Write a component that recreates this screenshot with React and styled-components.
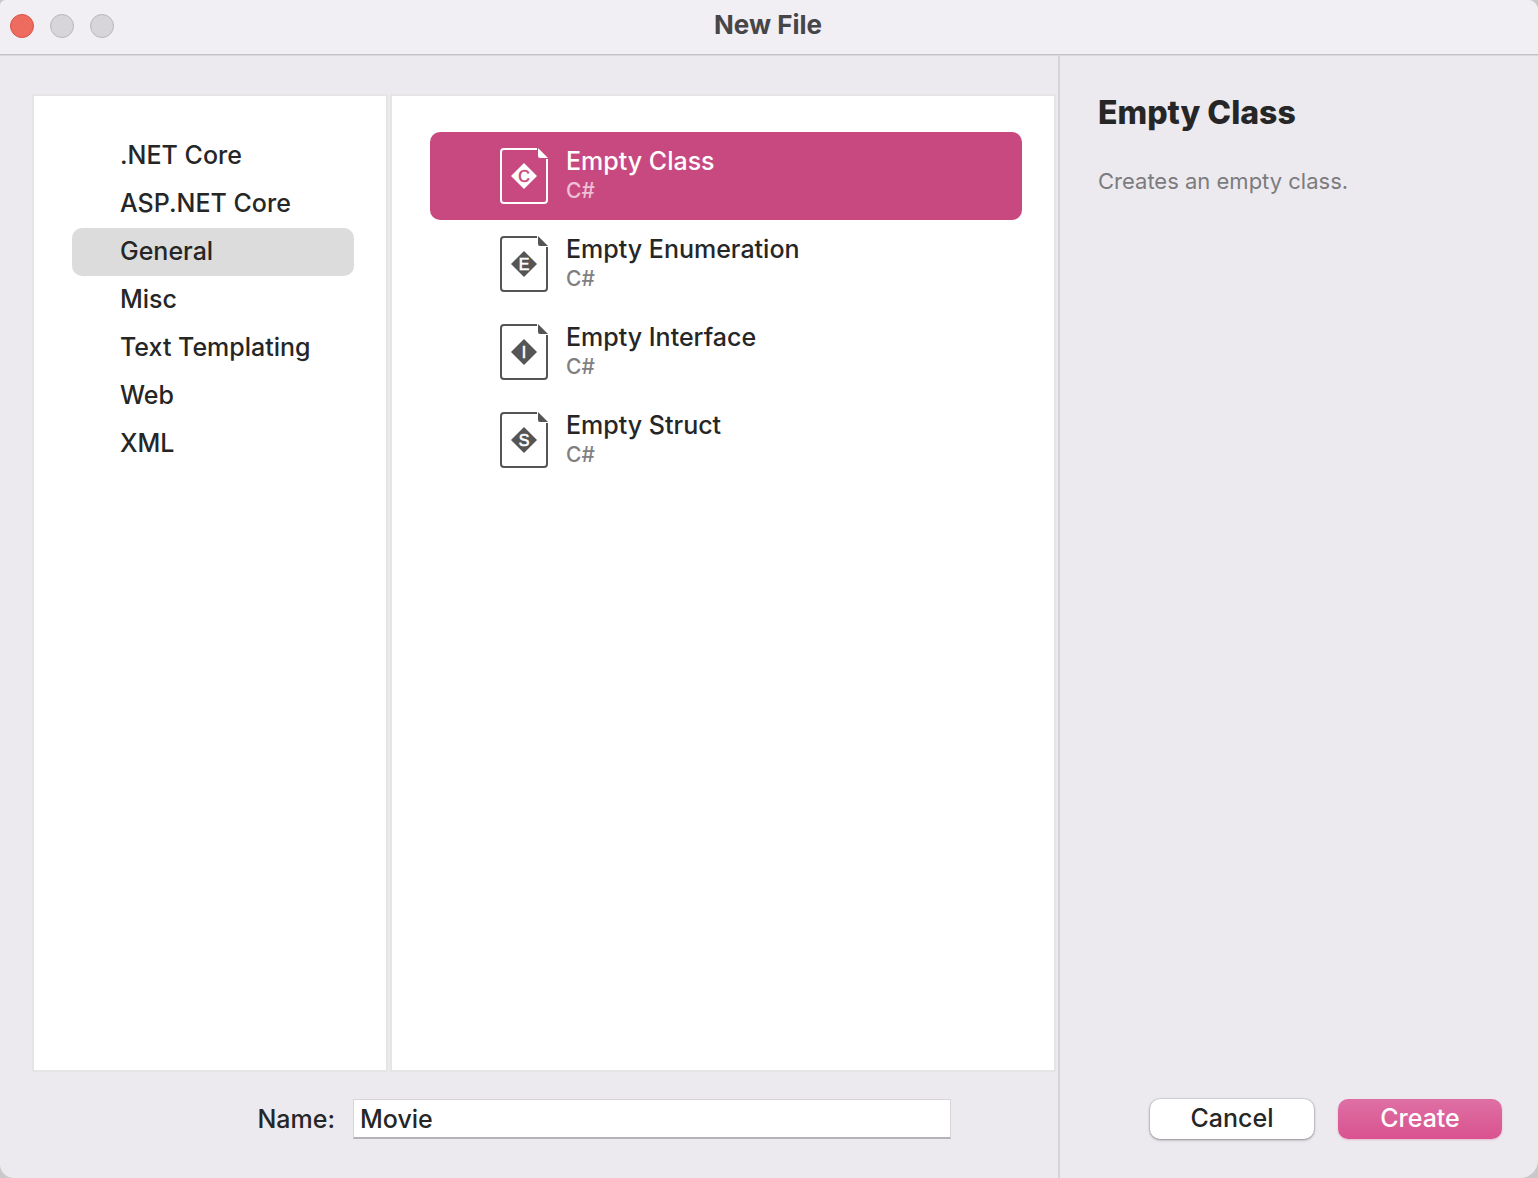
import React, { useState } from "react";
import styled, { createGlobalStyle } from "styled-components";

const GlobalStyle = createGlobalStyle`
  *, *::before, *::after { box-sizing: border-box; }
  body {
    margin: 0;
    background: #c9c9c9;
    color: #262626;
    font-family: Inter, "Liberation Sans", sans-serif;
    font-size: 25px;
    font-weight: 450;
    line-height: 32px;
  }
  button, input { font: inherit; color: inherit; }
  h1, h2, p, ul { margin: 0; padding: 0; }
  ul { list-style: none; }
`;

const Window = styled.main`
  display: flex;
  flex-direction: column;
  min-height: 100vh;
  overflow: hidden;
  background: #eceaef;
  border-radius: 6px 10px 18px 14px;
`;

const TitleBar = styled.header`
  display: grid;
  grid-template-columns: 1fr auto 1fr;
  align-items: center;
  height: 56px;
  padding: 0 12px 4px 10px;
  background: #f1eef4;
  border-bottom: 1px solid #d9d7dc;
  box-shadow: inset 0 -1px #c3c1c7;
`;

const WindowControls = styled.div`
  display: flex;
  gap: 16px;
`;

const ControlDot = styled.button`
  width: 24px;
  height: 24px;
  padding: 0;
  border: 1px solid ${(p) => (p.$active ? "#db5247" : "#b9b6bd")};
  border-radius: 50%;
  background: ${(p) => (p.$active ? "#ed6b5f" : "#d7d4da")};
`;

const Title = styled.h1`
  padding-bottom: 2px;
  font-size: 26px;
  font-weight: 700;
  color: #464548;
`;

const Body = styled.div`
  display: grid;
  grid-template-columns: minmax(0, 1058fr) minmax(0, 480fr);
  flex: 1;
`;

const Chooser = styled.section`
  display: flex;
  flex-direction: column;
  padding: 38px 2px 39px 32px;
`;

const Panels = styled.div`
  display: grid;
  grid-template-columns: minmax(0, 356fr) minmax(0, 666fr);
  gap: 2px;
  flex: 1;
`;

const Panel = styled.ul`
  padding: 36px 32px 36px 38px;
  border: 2px solid #e5e5e5;
  background: #fff;
`;

const Category = styled.button`
  display: block;
  width: 100%;
  height: 48px;
  padding: 0 48px 2px;
  border: 0;
  border-radius: 10px;
  background: ${(p) => (p.$selected ? "#dcdcdc" : "transparent")};
  text-align: left;
  white-space: nowrap;
`;

const Template = styled.button`
  display: flex;
  align-items: center;
  gap: 18px;
  width: 100%;
  height: 88px;
  padding: 0 70px;
  border: 0;
  border-radius: 10px;
  background: ${(p) => (p.$selected ? "#c84980" : "#fff")};
  color: ${(p) => (p.$selected ? "#fff" : "#262626")};
  text-align: left;
`;

const TemplateIcon = styled.svg`
  flex: none;
  width: 48px;
  height: 56px;
  color: ${(p) => (p.$selected ? "#fff" : "#555")};
  --paper: ${(p) => (p.$selected ? "#c84980" : "#fff")};
`;

const TemplateText = styled.span`
  display: flex;
  flex-direction: column;
  gap: 1px;
  padding-bottom: 3px;
`;

const Language = styled.span`
  font-size: 21px;
  line-height: 26px;
  color: ${(p) => (p.$selected ? "#efbfd6" : "#808080")};
`;

const NameRow = styled.div`
  display: grid;
  grid-template-columns: minmax(0, 303fr) minmax(0, 598fr) minmax(0, 87fr);
  column-gap: 18px;
  align-items: center;
  margin-top: 27px;
`;

const NameLabel = styled.label`
  text-align: right;
`;

const NameInput = styled.input`
  width: 100%;
  height: 40px;
  padding: 0 6px;
  border: 1px solid #d6d4d9;
  border-bottom: 2px solid #b5b3b8;
  border-radius: 0;
  background: #fff;
  outline: none;
`;

const Details = styled.aside`
  display: flex;
  flex-direction: column;
  padding: 37px 36px 39px 38px;
  border-left: 2px solid #d6d4d9;
`;

const DetailsTitle = styled.h2`
  font-size: 32px;
  line-height: 40px;
  font-weight: 800;
`;

const Description = styled.p`
  margin-top: 32px;
  font-size: 22px;
  font-weight: 400;
  color: #7c7b7e;
`;

const Actions = styled.div`
  display: flex;
  justify-content: flex-end;
  gap: 24px;
  margin-top: auto;
`;

const Action = styled.button`
  width: 164px;
  height: 40px;
  padding: 0 0 2px;
  border: 0;
  border-radius: 10px;
  background: ${(p) => (p.$primary ? "linear-gradient(#de70a4, #d9528f)" : "#fff")};
  color: ${(p) => (p.$primary ? "#fff" : "#262626")};
  font-weight: ${(p) => (p.$primary ? 500 : 450)};
  box-shadow: ${(p) =>
    p.$primary
      ? "0 1px 2px rgba(200, 73, 128, 0.3)"
      : "0 0 0 1px rgba(0, 0, 0, 0.08), 0 1px 3px rgba(0, 0, 0, 0.35)"};
`;

const categories = [".NET Core", "ASP.NET Core", "General", "Misc", "Text Templating", "Web", "XML"];

const templates = [
  { name: "Empty Class", letter: "C", description: "Creates an empty class." },
  { name: "Empty Enumeration", letter: "E", description: "Creates an empty enumeration." },
  { name: "Empty Interface", letter: "I", description: "Creates an empty interface." },
  { name: "Empty Struct", letter: "S", description: "Creates an empty struct." },
];

function FileIcon({ letter, selected }) {
  return (
    <TemplateIcon $selected={selected} viewBox="0 0 48 56" aria-hidden="true">
      <path
        d="M37 1H4a3 3 0 0 0-3 3v48a3 3 0 0 0 3 3h40a3 3 0 0 0 3-3V11"
        fill="none"
        stroke="currentColor"
        strokeWidth="2"
      />
      <path d="M38 0 48 10H40a2 2 0 0 1-2-2Z" fill="currentColor" />
      <path d="M24 15 37 28 24 41 11 28Z" fill="currentColor" />
      <text
        x="24"
        y="34"
        textAnchor="middle"
        fontFamily="'Liberation Sans', sans-serif"
        fontSize="16"
        fill="var(--paper)"
        stroke="var(--paper)"
        strokeWidth="0.6"
      >
        {letter}
      </text>
    </TemplateIcon>
  );
}

export default function App() {
  const [category, setCategory] = useState("General");
  const [selected, setSelected] = useState(0);
  const [name, setName] = useState("Movie");
  const current = templates[selected];

  return (
    <>
      <GlobalStyle />
      <Window>
        <TitleBar>
          <WindowControls>
            <ControlDot type="button" $active aria-label="Close" />
            <ControlDot type="button" aria-label="Minimize" disabled />
            <ControlDot type="button" aria-label="Zoom" disabled />
          </WindowControls>
          <Title>New File</Title>
        </TitleBar>
        <Body>
          <Chooser>
            <Panels>
              <Panel aria-label="Categories">
                {categories.map((item) => (
                  <li key={item}>
                    <Category
                      type="button"
                      $selected={item === category}
                      aria-pressed={item === category}
                      onClick={() => setCategory(item)}
                    >
                      {item}
                    </Category>
                  </li>
                ))}
              </Panel>
              <Panel aria-label="Templates">
                {templates.map((item, i) => (
                  <li key={item.name}>
                    <Template
                      type="button"
                      $selected={i === selected}
                      aria-pressed={i === selected}
                      onClick={() => setSelected(i)}
                    >
                      <FileIcon letter={item.letter} selected={i === selected} />
                      <TemplateText>
                        <span>{item.name}</span>
                        <Language $selected={i === selected}>C#</Language>
                      </TemplateText>
                    </Template>
                  </li>
                ))}
              </Panel>
            </Panels>
            <NameRow>
              <NameLabel htmlFor="file-name">Name:</NameLabel>
              <NameInput
                id="file-name"
                type="text"
                value={name}
                onChange={(e) => setName(e.target.value)}
              />
            </NameRow>
          </Chooser>
          <Details>
            <DetailsTitle>{current.name}</DetailsTitle>
            <Description>{current.description}</Description>
            <Actions>
              <Action type="button">Cancel</Action>
              <Action type="submit" $primary>
                Create
              </Action>
            </Actions>
          </Details>
        </Body>
      </Window>
    </>
  );
}
